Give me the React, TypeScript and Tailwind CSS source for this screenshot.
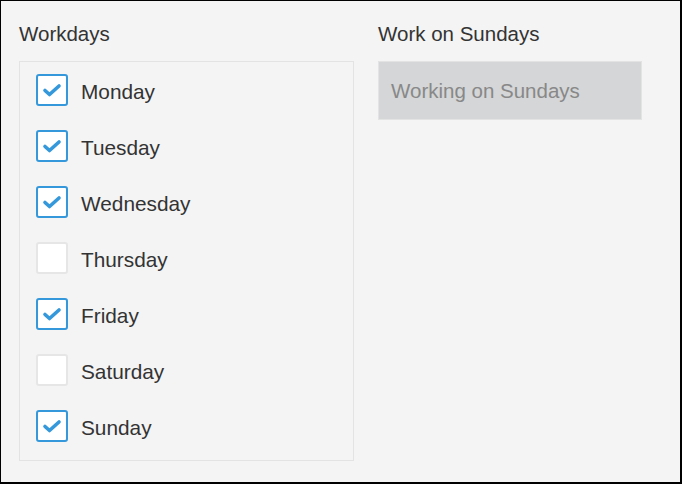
import React from "react";

const days = [
  { name: "Monday", checked: true },
  { name: "Tuesday", checked: true },
  { name: "Wednesday", checked: true },
  { name: "Thursday", checked: false },
  { name: "Friday", checked: true },
  { name: "Saturday", checked: false },
  { name: "Sunday", checked: true },
];

function Checkbox({ checked }: { checked: boolean }) {
  return (
    <span
      className={
        checked
          ? "flex h-[32px] w-[32px] shrink-0 items-center justify-center rounded-[3px] border-2 border-[#3498db] bg-white"
          : "flex h-[32px] w-[32px] shrink-0 items-center justify-center rounded-[3px] border-2 border-[#e6e6e6] bg-white"
      }
    >
      {checked && (
        <svg width="32" height="32" viewBox="0 0 32 32" className="-m-[2px]">
          <path
            d="M9 16.5l4.5 4 9.5-8.5"
            fill="none"
            stroke="#3498db"
            strokeWidth={3.6}
            strokeLinecap="round"
            strokeLinejoin="round"
          />
        </svg>
      )}
    </span>
  );
}

export default function App() {
  return (
    <div
      className="h-[484px] w-[682px] border-t border-l border-r-2 border-b-2 border-black bg-[#f4f4f4] pl-[18px] pt-[17px] text-[#333]"
      style={{ fontFamily: '"Liberation Sans", Arial, sans-serif' }}
    >
      <div className="flex gap-[24px]">
        <div className="w-[335px]">
          <h2 className="h-[32px] text-[20.5px] leading-[32px] text-[#333]">Workdays</h2>
          <div className="mt-[11px] border border-[#e3e3e3] pb-[6px] pl-[16px]">
            {days.map((d) => (
              <label key={d.name} className="flex h-[56px] items-center gap-[13px]">
                <Checkbox checked={d.checked} />
                <span className="pt-[3px] text-[20.8px] text-[#333]">{d.name}</span>
              </label>
            ))}
          </div>
        </div>
        <div className="w-[264px]">
          <h2 className="h-[32px] text-[20.5px] leading-[32px] text-[#333]">Work on Sundays</h2>
          <div className="mt-[11px] flex h-[59px] items-center border border-[#e3e3e3] bg-[#d4d6d7] pl-[12px]">
            <span className="pt-[1px] text-[20.5px] text-[#888]">Working on Sundays</span>
          </div>
        </div>
      </div>
    </div>
  );
}
